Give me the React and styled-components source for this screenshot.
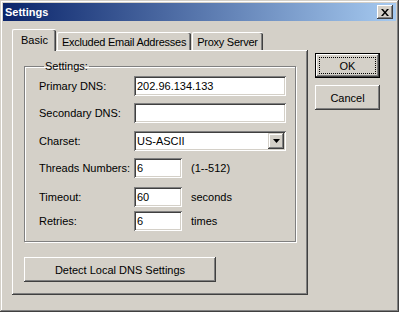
import React from 'react';
import styled, { createGlobalStyle } from 'styled-components';

const GlobalStyle = createGlobalStyle`
  html, body {
    margin: 0;
    padding: 0;
    background: #d4d0c8;
  }
  body {
    font-family: "Liberation Sans", Arial, sans-serif;
    font-size: 11px;
    color: #000;
  }
`;

const Window = styled.div`
  width: 399px;
  height: 312px;
  box-sizing: border-box;
  padding: 3px;
  background: #d4d0c8;
  box-shadow: inset -1px -1px #404040, inset 1px 1px #d4d0c8,
    inset -2px -2px #808080, inset 2px 2px #ffffff;
  display: flex;
  flex-direction: column;
`;

const TitleBar = styled.div`
  height: 18px;
  display: flex;
  align-items: center;
  justify-content: space-between;
  padding: 0 3px 0 2px;
  background: linear-gradient(to right, #0a246a, #a6caf0);
`;

const Title = styled.span`
  color: #fff;
  font-weight: bold;
  font-size: 11px;
`;

const CloseButton = styled.div`
  width: 16px;
  height: 14px;
  box-sizing: border-box;
  background: #d4d0c8;
  box-shadow: inset -1px -1px #404040, inset 1px 1px #ffffff,
    inset -2px -2px #808080, inset 2px 2px #d4d0c8;
  display: flex;
  align-items: center;
  justify-content: center;
`;

const Body = styled.div`
  flex: 1;
  display: flex;
  padding: 8px 0 0 9px;
  gap: 7px;
`;

const TabControl = styled.div`
  width: 296px;
  display: flex;
  flex-direction: column;
`;

const TabStrip = styled.div`
  height: 21px;
  display: flex;
  align-items: flex-end;
  position: relative;
  z-index: 1;
`;

const Tab = styled.div`
  box-sizing: border-box;
  height: ${(p) => (p.$active ? '22px' : '18px')};
  margin-bottom: ${(p) => (p.$active ? '-1px' : '0')};
  margin-left: ${(p) => (p.$active ? '0' : '1px')};
  padding: ${(p) => (p.$active ? '4px 8px 0 8px' : '3px 5px 0 4px')};
  letter-spacing: ${(p) => (p.$active ? '0' : '-0.25px')};
  display: flex;
  align-items: flex-start;
  background: #d4d0c8;
  border-top: 1px solid #ffffff;
  border-left: 1px solid #ffffff;
  border-radius: 2px 2px 0 0;
  box-shadow: inset -1px 0 #404040, inset -2px 0 #808080;
  white-space: nowrap;
`;

const Panel = styled.div`
  flex: 1;
  box-sizing: border-box;
  margin-bottom: 14px;
  padding: 10px 12px 0 12px;
  box-shadow: inset -1px -1px #404040, inset 1px 1px #ffffff,
    inset -2px -2px #808080;
  display: flex;
  flex-direction: column;
`;

const GroupBox = styled.fieldset`
  margin: 0;
  padding: 0 0 10px 14px;
  border: 1px solid #808080;
  box-shadow: 1px 1px #ffffff, inset 1px 1px #ffffff;
  min-width: 0;
`;

const Legend = styled.legend`
  padding: 0 1px;
  margin-left: 5px;
  line-height: 13px;
`;

const Row = styled.div`
  display: flex;
  align-items: center;
  height: 20px;
  margin-top: ${(p) => p.$gap}px;
`;

const Label = styled.span`
  width: 95px;
  flex-shrink: 0;
  white-space: nowrap;
`;

const Field = styled.div`
  box-sizing: border-box;
  width: ${(p) => p.$w}px;
  height: 20px;
  background: #fff;
  padding: 0 3px;
  display: flex;
  align-items: center;
  justify-content: space-between;
  box-shadow: inset 1px 1px #808080, inset -1px -1px #ffffff,
    inset 2px 2px #404040, inset -2px -2px #d4d0c8;
`;

const DropButton = styled.div`
  width: 16px;
  height: 16px;
  margin-right: -1px;
  box-sizing: border-box;
  background: #d4d0c8;
  box-shadow: inset -1px -1px #404040, inset 1px 1px #d4d0c8,
    inset -2px -2px #808080, inset 2px 2px #ffffff;
  display: flex;
  align-items: center;
  justify-content: center;
`;

const Unit = styled.span`
  margin-left: 9px;
`;

const PushButton = styled.div`
  box-sizing: border-box;
  width: ${(p) => p.$w}px;
  height: 25px;
  background: #d4d0c8;
  display: flex;
  align-items: center;
  justify-content: center;
  position: relative;
  box-shadow: ${(p) =>
    p.$default
      ? 'inset 0 0 0 1px #000, inset -2px -2px #404040, inset 2px 2px #ffffff, inset -3px -3px #808080'
      : 'inset -1px -1px #404040, inset 1px 1px #ffffff, inset -2px -2px #808080'};
`;

const FocusRing = styled.span`
  position: absolute;
  inset: 4px;
  border: 1px dotted #000;
`;

const DetectButton = styled(PushButton)`
  margin-top: 15px;
`;

const SideColumn = styled.div`
  display: flex;
  flex-direction: column;
  gap: 7px;
  padding-top: 24px;
`;

const rows = [
  { label: 'Primary DNS:', value: '202.96.134.133', w: 152, gap: 3 },
  { label: 'Secondary DNS:', value: '', w: 152, gap: 7 },
  { label: 'Charset:', value: 'US-ASCII', w: 152, gap: 8, select: true },
  { label: 'Threads Numbers:', value: '6', w: 48, gap: 7, unit: '(1--512)' },
  { label: 'Timeout:', value: '60', w: 48, gap: 9, unit: 'seconds' },
  { label: 'Retries:', value: '6', w: 48, gap: 4, unit: 'times' },
];

const App = () => (
  <Window>
    <GlobalStyle />
    <TitleBar>
      <Title>Settings</Title>
      <CloseButton>
        <svg width="8" height="7" viewBox="0 0 8 7">
          <path d="M0 0h2l2 2.5L6 0h2L5 3.5 8 7H6L4 4.5 2 7H0l3-3.5z" fill="#000" />
        </svg>
      </CloseButton>
    </TitleBar>
    <Body>
      <TabControl>
        <TabStrip>
          <Tab $active>Basic</Tab>
          <Tab>Excluded Email Addresses</Tab>
          <Tab>Proxy Server</Tab>
        </TabStrip>
        <Panel>
          <GroupBox>
            <Legend>Settings:</Legend>
            {rows.map((r) => (
              <Row key={r.label} $gap={r.gap}>
                <Label>{r.label}</Label>
                <Field $w={r.w}>
                  <span>{r.value}</span>
                  {r.select && (
                    <DropButton>
                      <svg width="7" height="4" viewBox="0 0 7 4">
                        <path d="M0 0h7L3.5 4z" fill="#000" />
                      </svg>
                    </DropButton>
                  )}
                </Field>
                {r.unit && <Unit>{r.unit}</Unit>}
              </Row>
            ))}
          </GroupBox>
          <DetectButton $w={192}>Detect Local DNS Settings</DetectButton>
        </Panel>
      </TabControl>
      <SideColumn>
        <PushButton $w={65} $default>
          <FocusRing />
          OK
        </PushButton>
        <PushButton $w={65}>Cancel</PushButton>
      </SideColumn>
    </Body>
  </Window>
);

export default App;
